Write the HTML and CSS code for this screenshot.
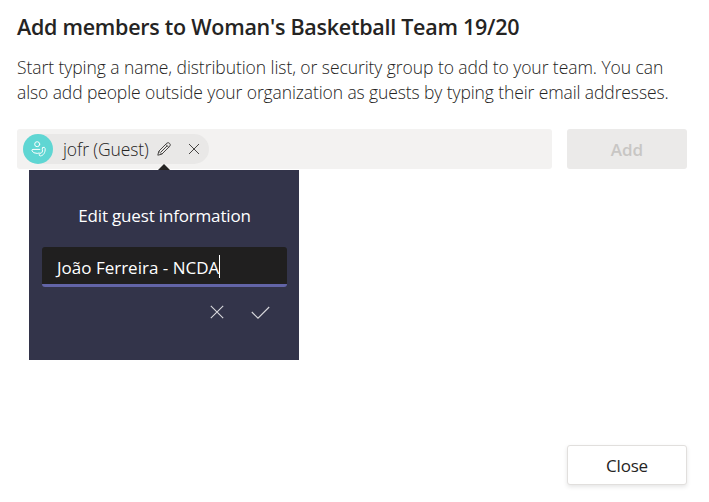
FILE: index.html
```html
<!DOCTYPE html>
<html lang="en">
<head>
<meta charset="utf-8">
<title>Add members</title>
<link rel="stylesheet" href="styles.css">
</head>
<body>
<main class="dialog">
  <h1 class="title"><span>Add members to Woman's Basketball Team 19/20</span></h1>
  <p class="intro"><span class="line-one">Start typing a name, distribution list, or security group to add to your team. You can</span><br><span class="line-two">also add people outside your organization as guests by typing their email addresses.</span></p>
  <div class="picker-row">
    <div class="picker">
      <div class="chip">
        <svg class="avatar" viewBox="0 0 30 30" fill="none" stroke="#fff" stroke-width="1" stroke-linecap="round" stroke-linejoin="round">
          <circle cx="15" cy="15" r="15" fill="#5fd6d3" stroke="none"/>
          <circle cx="14.2" cy="10.2" r="2.5"/>
          <path d="M16.8 15.4H10Q8.6 15.5 9 16.8Q10 19.4 14.2 19.4L16.2 19"/>
          <path d="M19.8 13.4Q21.8 12.6 22.1 14.5C22.6 18.4 20.2 21.8 17.4 21.9Q15.9 21.8 16.3 20.4L16.9 19.3Q18.6 19.3 19.1 18.2Q19.8 17.1 19.4 15.8Z"/>
        </svg>
        <span class="chip-name">jofr (Guest)</span>
        <span class="edit">
          <svg width="16" height="16" viewBox="0 0 16 16" fill="none" stroke="#484644" stroke-width="1" stroke-linejoin="round"><path d="M1.8 14.2L2.8 10.2L10.8 2.2Q12.2 1 13.6 2.4Q15 3.8 13.8 5.2L5.8 13.2ZM9.7 3.3L12.7 6.3M2.8 10.2L5.8 13.2M5 11L11.2 4.8"/></svg>
          <span class="popup">
            <span class="popup-title">Edit guest information</span>
            <span class="field"><span class="field-text">João Ferreira - NCDA</span><span class="caret"></span></span>
            <span class="actions">
              <svg width="14" height="14" viewBox="0 0 14 14" fill="none" stroke="#d8d8dc" stroke-width="1.1"><path d="M.8.8L13.2 13.2M13.2.8L.8 13.2"/></svg>
              <svg width="19" height="14" viewBox="0 0 19 14" fill="none" stroke="#d8d8dc" stroke-width="1.1"><path d="M.8 7L7 13.2L18.2 2"/></svg>
            </span>
          </span>
        </span>
        <svg class="remove" width="12" height="12" viewBox="0 0 12 12" fill="none" stroke="#484644"><path d="M1 1L11 11M11 1L1 11"/></svg>
      </div>
    </div>
    <button class="button add" disabled><span>Add</span></button>
  </div>
  <footer class="footer"><button class="button close"><span>Close</span></button></footer>
</main>
</body>
</html>
```

FILE: styles.css
```css
* { box-sizing: border-box; }
body {
  margin: 0;
  background: #fff;
  color: #252423;
  font-family: "Open Sans", "Noto Sans", sans-serif;
}
.dialog {
  display: flex;
  flex-direction: column;
  width: 709px;
  height: 502px;
  padding: 12px 22px 17px 17px;
}
.title {
  margin: 0;
  font-size: 21.5px;
  font-weight: 590;
  line-height: 30px;
  letter-spacing: -0.27px;
  white-space: nowrap;
}
.intro {
  margin: 13px 0 0;
  height: 74px;
  font-size: 17.5px;
  font-weight: 340;
  line-height: 25px;
  white-space: nowrap;
}
.line-one { letter-spacing: -0.065px; }
.line-two { letter-spacing: -0.105px; }
.picker-row { display: flex; gap: 15px; height: 40px; }
.picker {
  display: flex;
  align-items: center;
  width: 535px;
  padding: 0 6px;
  border-radius: 3px;
  background: #f3f2f1;
}
.chip {
  display: flex;
  align-items: center;
  width: 186px;
  height: 30px;
  border-radius: 15px;
  background: #e9e8e7;
}
.avatar { width: 30px; height: 30px; flex: none; }
.chip-name {
  width: 93px;
  padding-left: 10px;
  font-size: 17.5px;
  font-weight: 340;
  letter-spacing: -0.1px;
  white-space: nowrap;
}
.edit {
  position: relative;
  display: flex;
  width: 16px;
  height: 16px;
  margin-left: 10px;
}
.edit::after {
  content: "";
  position: absolute;
  left: 2px;
  top: 23px;
  border: 6px solid transparent;
  border-top: 0;
  border-bottom-color: #252423;
}
.remove { margin-left: 16px; }
.popup {
  position: absolute;
  left: -127px;
  top: 29px;
  display: flex;
  flex-direction: column;
  width: 270px;
  height: 190px;
  padding: 33px 12px 0 13px;
  background: #33344a;
  color: #fff;
  font-size: 17px;
}
.popup-title { line-height: 25px; text-align: center; white-space: nowrap; letter-spacing: -0.17px; }
.field {
  display: flex;
  align-items: center;
  height: 40px;
  margin-top: 19px;
  padding: 4px 0 0 15px;
  border-bottom: 3px solid #6264a7;
  border-radius: 3px;
  background: #201f1f;
}
.field-text { white-space: nowrap; }
.caret { width: 1px; height: 23px; margin-top: -3px; background: #fff; }
.actions {
  display: flex;
  justify-content: flex-end;
  gap: 27px;
  padding: 18px 17px 0 0;
}
.button {
  display: flex;
  align-items: center;
  justify-content: center;
  width: 120px;
  height: 40px;
  padding: 0;
  border: 0;
  border-radius: 3px;
  font: 600 17px "Open Sans", "Noto Sans", sans-serif;
}
.add { background: #ebeae9; color: #c8c6c4; }
.footer { display: flex; justify-content: flex-end; margin-top: auto; }
.close {
  border: 1px solid #e1dfdd;
  background: #fff;
  color: #252423;
  font-weight: 500;
  letter-spacing: -0.2px;
  box-shadow: 0 2px 4px rgba(0, 0, 0, .1);
}
```
